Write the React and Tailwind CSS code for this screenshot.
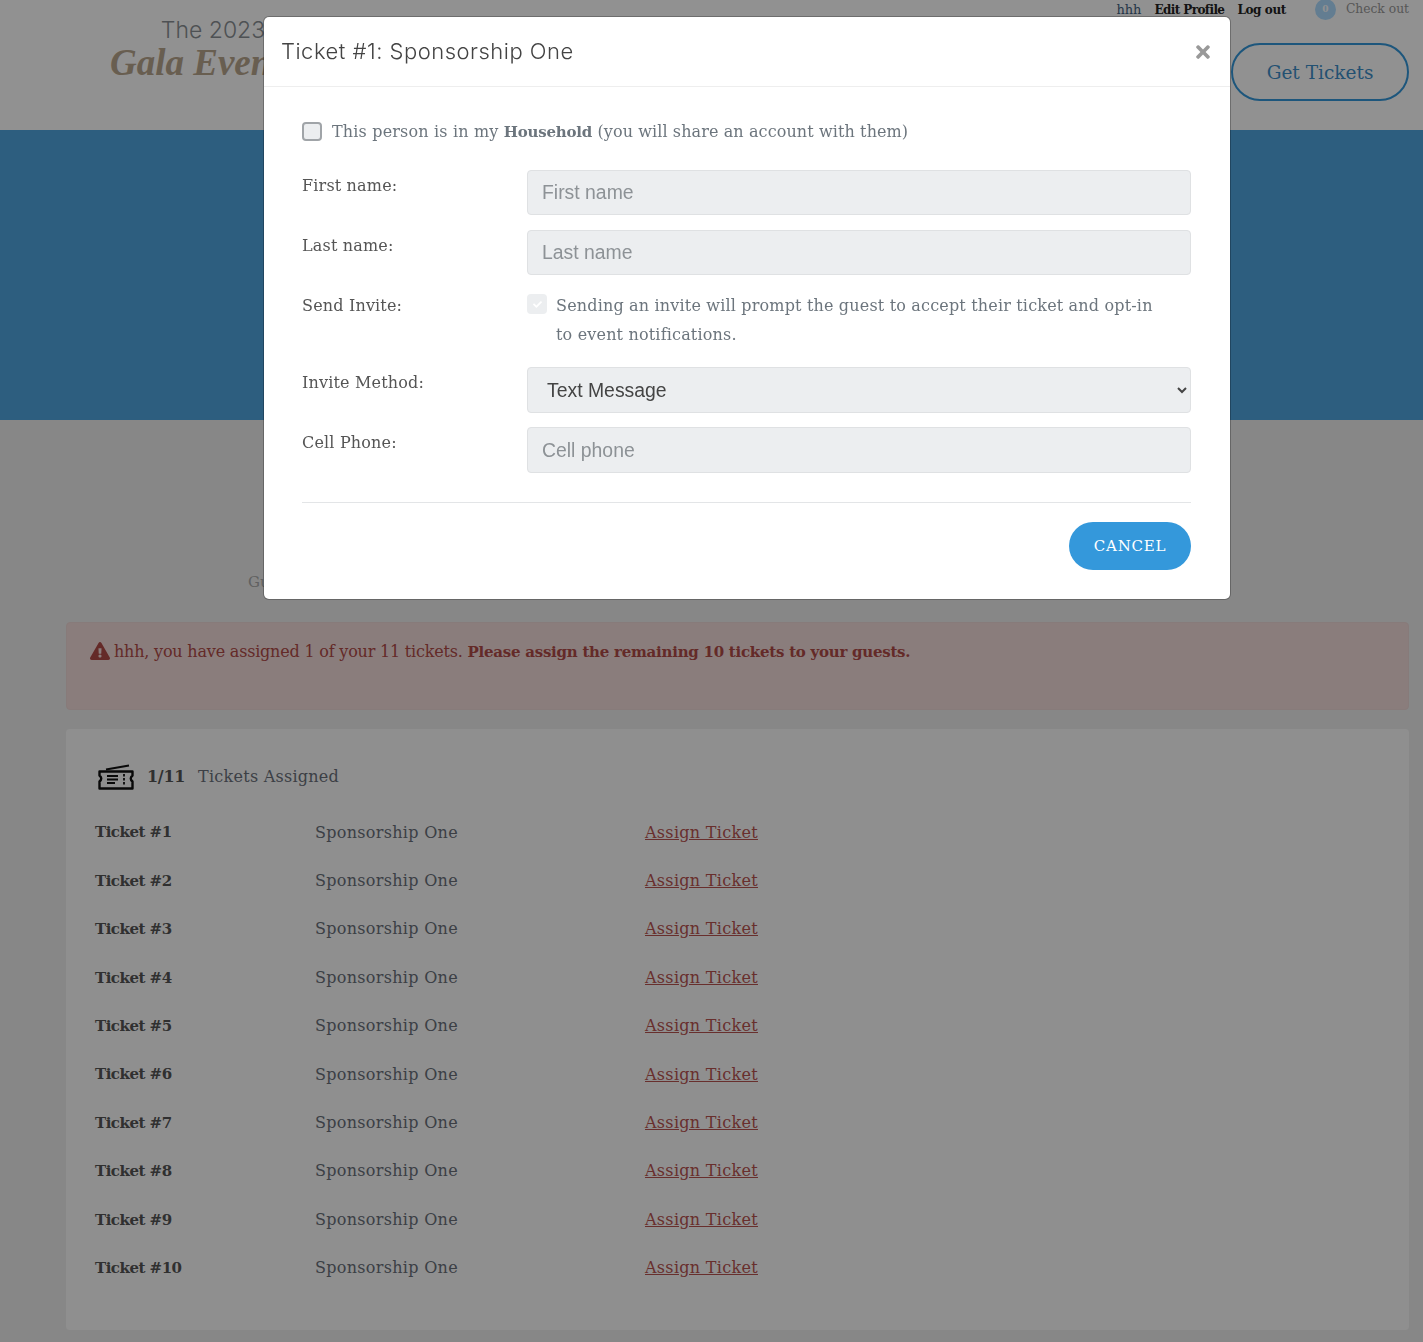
import React from "react";
import { FaExclamationTriangle, FaTimes, FaCheck } from "react-icons/fa";

const slab = "font-['DejaVu_Serif',serif]";
const tickets = [1, 2, 3, 4, 5, 6, 7, 8, 9, 10];

const TicketIcon = () => (
  <svg width="38" height="27" viewBox="0 0 38 27" fill="none" stroke="#111" strokeWidth="2.4">
    <path d="M2.500 7.500H35.500V11.500Q32 14.500 35.500 17.500V24.500H2.500V17.500Q6 14.500 2.500 11.500Z" strokeLinejoin="round" />
    <path d="M9 5.500L32 1.500" strokeWidth="2" />
    <path d="M10 12h11M10 15.500h11M10 19h8" strokeWidth="1.800" />
    <path d="M27 10v2.500M27 14v2.500M27 18v2.500" strokeWidth="1.800" />
  </svg>
);

const FormRow = ({ label, className = "mb-[15px]", children }) => (
  <div className={`flex ${className}`}>
    <label className="w-[225px] shrink-0 pt-[4px] text-[#555] text-[16px] leading-[24px]">{label}</label>
    <div className="flex-1">{children}</div>
  </div>
);

const TextInput = ({ placeholder, height = "h-[45px]" }) => (
  <input
    disabled
    placeholder={placeholder}
    className={`block w-full ${height} px-[14px] rounded-[4px] border border-[#dfe1e3] bg-[#eceef0] font-['Liberation_Sans',sans-serif] text-[19.4px] tracking-normal placeholder:text-[#8d9296]`}
  />
);

export default function App() {
  return (
    <div className={`relative min-h-[1342px] bg-[#eeeeee] ${slab}`}>
      {/* page header */}
      <header className="h-[130px] bg-white flex justify-between pr-[14px]">
        <div className="ml-[110px] w-[206px] pt-[17px]">
          <div className="font-['Inter',sans-serif] font-light text-[23px] leading-[26px] text-center text-[#8a8f94]">The 2023</div>
          <div className="mt-[2px] font-['Liberation_Serif',serif] italic font-bold text-[37px] leading-[36px] text-[#b8a58e]">Gala Event</div>
        </div>
        <div className="flex flex-col items-end">
          <div className="flex items-center h-[19px] text-[13px]">
            <a className="text-[#3f5f80] mr-[13px]">hhh</a>
            <a className="font-bold text-[12px] tracking-[-0.6px] text-[#222] mr-[13px]">Edit Profile</a>
            <a className="font-bold text-[12px] tracking-[-0.4px] text-[#222] mr-[29px]">Log out</a>
            <span className="w-[21px] h-[21px] rounded-full bg-[#aedcff] text-white text-[9px] font-bold flex items-center justify-center mr-[10px]">0</span>
            <a className="text-[12.300px] text-[#999]">Check out</a>
          </div>
          <a className="mt-[24px] w-[178px] h-[58px] pt-[1px] rounded-full border-2 border-[#3498db] text-[#3f8fc9] text-[18.500px] flex items-center justify-center">
            Get Tickets
          </a>
        </div>
      </header>

      {/* hero band */}
      <div className="h-[290px] bg-[#4fa5e0]" />

      <main className="pl-[66px] pr-[14px]">
        <p className="pt-[151px] pl-[182px] h-[202px] text-[15px] text-[#aaa]">Guest</p>

        <div className="h-[88px] rounded-[4px] border border-[#eed8d6] bg-[#f3dcda] pl-[23px] pt-[17px] text-[16px] leading-[24px] tracking-[-0.2px] text-[#b04a47] flex items-start">
          <FaExclamationTriangle className="mt-[1px] mr-[4px] text-[20px]" />
          <span>
            hhh, you have assigned 1 of your 11 tickets.{" "}
            <strong className="font-bold text-[15px] tracking-[-0.25px]">Please assign the remaining 10 tickets to your guests.</strong>
          </span>
        </div>

        <section className="mt-[19px] h-[601px] rounded-[4px] bg-[#fcfcfc] pl-[29px] pt-[34px]">
          <div className="flex items-center h-[28px] mb-[17.500px] text-[#6a707a]">
            <span className="ml-[2px] flex">
              <TicketIcon />
            </span>
            <strong className="ml-[12px] mr-[13px] text-[16px] tracking-[-0.3px] font-bold text-[#555]">1/11</strong>
            <span className="text-[16px] tracking-[0.25px]">Tickets Assigned</span>
          </div>
          {tickets.map((n) => (
            <div key={n} className="flex items-center h-[48.4px] text-[16px] tracking-[0.3px] text-[#6a707a]">
              <strong className="w-[220px] font-bold text-[15px] tracking-[-0.5px] text-[#555]">Ticket #{n}</strong>
              <span className="w-[330px]">Sponsorship One</span>
              <a className="underline text-[#b85350]">Assign Ticket</a>
            </div>
          ))}
        </section>
      </main>

      {/* modal */}
      <div className="fixed inset-0 bg-black/[.43] pl-[264px] pt-[17px]">
        <div className="w-[966px] h-[582px] rounded-[5px] bg-white shadow-[0_0_0_1px_rgba(0,0,0,0.25)]">
          <div className="h-[70px] border-b border-[#eeeeee] flex items-center justify-between pl-[17px] pr-[17px]">
            <h4 className="font-['Inter',sans-serif] font-light text-[22px] tracking-[0.5px] text-[#444]">Ticket #1: Sponsorship One</h4>
            <FaTimes className="text-[20px] text-[#999]" />
          </div>

          <div className="px-[38px] pr-[39px] pt-[33px] tracking-[0.17px]">
            <div className="flex items-center h-[24px] mb-[26px] text-[16px] text-[#6c757d]">
              <input type="checkbox" readOnly className="appearance-none w-[20px] h-[19px] -mt-[2px] rounded-[4px] border-2 border-[#a0a4a8] bg-[#eceef0] mr-[10px]" />
              <span>
                This person is in my <strong className="font-bold text-[15px] tracking-[-0.2px]">Household</strong>{" "}
                <span className="tracking-[0.1px]">(you will share an account with them)</span>
              </span>
            </div>

            <FormRow label="First name:">
              <TextInput placeholder="First name" />
            </FormRow>
            <FormRow label="Last name:">
              <TextInput placeholder="Last name" />
            </FormRow>
            <FormRow label="Send Invite:" className="mb-[19px]">
              <div className="flex items-start text-[16px] leading-[29px] text-[#6c757d]">
                <span className="mt-[4px] mr-[9px] w-[20px] h-[20px] shrink-0 rounded-[4px] bg-[#eceef0] flex items-center justify-center">
                  <FaCheck className="text-[9px] text-white" />
                </span>
                <span className="pr-[30px] pt-[1px] -mb-[1px]">Sending an invite will prompt the guest to accept their ticket and opt-in to event notifications.</span>
              </div>
            </FormRow>
            <FormRow label="Invite Method:" className="mb-[14px]">
              <select
                disabled
                className="block w-full h-[46px] pl-[15px] pr-[4px] rounded-[4px] border border-[#dfe1e3] bg-[#eceef0] font-['Liberation_Sans',sans-serif] text-[19.4px] tracking-normal text-[#444] opacity-100"
              >
                <option>Text Message</option>
              </select>
            </FormRow>
            <FormRow label="Cell Phone:" className="mb-[29px]">
              <TextInput placeholder="Cell phone" height="h-[46px]" />
            </FormRow>

            <div className="border-t border-[#e3e5e7] pt-[19px] flex justify-end">
              <button className="w-[122px] h-[48px] pt-[1px] rounded-full bg-[#3498db] text-white text-[15px] tracking-[0.05em]">CANCEL</button>
            </div>
          </div>
        </div>
      </div>
    </div>
  );
}
